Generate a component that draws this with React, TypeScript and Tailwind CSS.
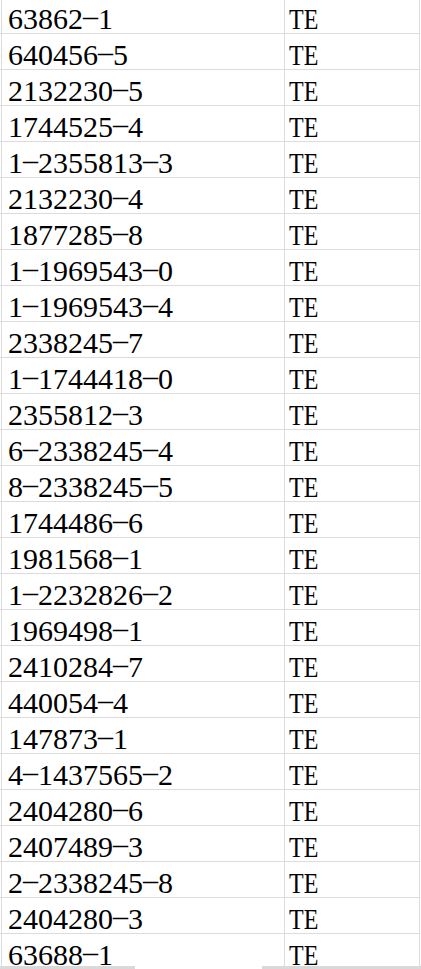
import React from "react";

const rows = [
  "63862-1",
  "640456-5",
  "2132230-5",
  "1744525-4",
  "1-2355813-3",
  "2132230-4",
  "1877285-8",
  "1-1969543-0",
  "1-1969543-4",
  "2338245-7",
  "1-1744418-0",
  "2355812-3",
  "6-2338245-4",
  "8-2338245-5",
  "1744486-6",
  "1981568-1",
  "1-2232826-2",
  "1969498-1",
  "2410284-7",
  "440054-4",
  "147873-1",
  "4-1437565-2",
  "2404280-6",
  "2407489-3",
  "2-2338245-8",
  "2404280-3",
  "63688-1",
];

function PartNo({ text }: { text: string }) {
  const parts = text.split("-");
  return (
    <span className="whitespace-nowrap">
      {parts.map((p, i) => (
        <React.Fragment key={i}>
          {i > 0 && <span className="relative -top-[3px]">–</span>}
          {p}
        </React.Fragment>
      ))}
    </span>
  );
}

export default function App() {
  return (
    <div
      className="relative h-[969px] w-[421px] overflow-hidden bg-white text-black"
      style={{ fontFamily: '"Liberation Serif", "Times New Roman", serif' }}
    >
      <div className="-mt-[2px] flex flex-col">
        {rows.map((r, i) => (
          <div key={i} className="flex h-[36px] w-[420px] box-border border-b border-[#dcdcdc]">
            <div className="ml-[1px] box-border h-full w-[284px] border-x border-[#dcdcdc] pl-[6px] pt-[6px] text-[30px] leading-[30px]">
              <PartNo text={r} />
            </div>
            <div className="box-border h-full flex-1 border-r border-[#dcdcdc] pl-[4px] pt-[6px] text-[30px] leading-[30px]">
              <span className="inline-block origin-left scale-x-[0.8]">TE</span>
            </div>
          </div>
        ))}
      </div>
      <div className="absolute left-0 top-[966px] h-[3px] w-[135px] bg-[#d9d9d9]" />
      <div className="absolute left-[262px] top-[966px] h-[3px] w-[159px] bg-[#d9d9d9]" />
    </div>
  );
}
